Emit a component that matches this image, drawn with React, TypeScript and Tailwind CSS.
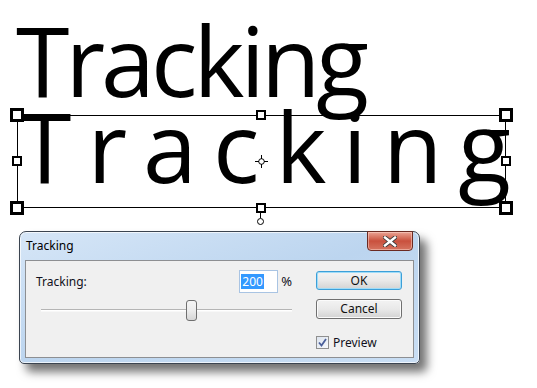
import React from "react";

const sans = "font-['Noto_Sans','Open_Sans',sans-serif]";

// selection handle on the text frame
const Handle = ({ className }: { className: string }) => (
  <div className={`absolute bg-white border-black ${className}`} />
);

const CloseGlyph = () => (
  <svg width="14" height="11" viewBox="0 0 14 11">
    <path
      d="M2 1.5 L12 9.5 M12 1.5 L2 9.5"
      stroke="#3a3a3a"
      strokeWidth="4.2"
      strokeLinecap="square"
    />
    <path
      d="M2 1.5 L12 9.5 M12 1.5 L2 9.5"
      stroke="#ffffff"
      strokeWidth="2.4"
      strokeLinecap="square"
    />
  </svg>
);

const Crosshair = () => (
  <svg width="13" height="13" viewBox="0 0 13 13">
    <circle cx="6.5" cy="6.5" r="2.8" fill="none" stroke="black" strokeWidth="1" />
    <path d="M6.5 0 V4 M6.5 9 V13 M0 6.5 H4 M9 6.5 H13" stroke="black" strokeWidth="1" />
  </svg>
);

const Button = ({ label, focused }: { label: string; focused?: boolean }) => (
  <div
    className={`w-[86px] flex items-center justify-center rounded-[3px] border text-[12px] text-[#111] bg-gradient-to-b from-[#f3f3f3] via-[#e9e9e9] to-[#d3d3d3] ${
      focused
        ? "h-[19px] border-[#3c9fd8] shadow-[inset_0_0_0_1px_#9fdcf8]"
        : "h-[20px] border-[#707070] shadow-[inset_0_0_0_1px_#fbfbfb]"
    }`}
  >
    {label}
  </div>
);

export default function App() {
  return (
    <div className="w-[537px] h-[388px] bg-white overflow-hidden">
      {/* plain text */}
      <div className="pl-[16px] pt-[11px] h-[115px]">
        <div className="text-[97px] leading-none font-['Open_Sans',sans-serif] text-black tracking-[-4px] whitespace-nowrap">
          Tracking
        </div>
      </div>

      {/* tracked text inside its frame */}
      <div className="ml-[17px] w-[489px] h-[93px] border border-black relative">
        <div className="-mt-[19px] text-[97px] leading-none font-['Open_Sans',sans-serif] text-black tracking-[16px] whitespace-nowrap">
          Tracking
        </div>
        <Handle className="w-[14px] h-[14px] border-[3px] left-[-8px] top-[-8px]" />
        <Handle className="w-[14px] h-[14px] border-[3px] right-[-8px] top-[-8px]" />
        <Handle className="w-[14px] h-[14px] border-[3px] left-[-8px] bottom-[-8px]" />
        <Handle className="w-[14px] h-[14px] border-[3px] right-[-8px] bottom-[-8px]" />
        <Handle className="w-[10px] h-[10px] border-2 left-[238px] top-[-6px]" />
        <Handle className="w-[10px] h-[10px] border-2 left-[238px] bottom-[-6px]" />
        <Handle className="w-[10px] h-[10px] border-2 left-[-6px] top-[40px]" />
        <Handle className="w-[10px] h-[10px] border-2 right-[-6px] top-[40px]" />
        <div className="absolute left-[237px] top-[39px]">
          <Crosshair />
        </div>
        <div className="absolute left-[242px] bottom-[-11px] w-px h-[5px] bg-black" />
        <div className="absolute left-[239px] bottom-[-18px] w-[7px] h-[7px] rounded-full border border-black bg-white" />
      </div>

      {/* dialog */}
      <div
        className={`ml-[19px] mt-[23px] w-[401px] h-[133px] flex flex-col rounded-t-[7px] rounded-b-[5px] border border-[#3b4450] bg-gradient-to-br from-[#d6e6f7] via-[#bcd5ef] to-[#c9def4] shadow-[7px_8px_10px_rgba(0,0,0,0.55),inset_0_0_0_1px_rgba(255,255,255,0.7)] px-[5px] pb-[5px] ${sans}`}
      >
        <div className="h-[28px] flex items-start justify-between">
          <div className="pl-[1px] pt-[7px] text-[12px] leading-[14px] text-black">Tracking</div>
          <div className="-mt-px mr-[1px] w-[46px] h-[20px] flex items-center justify-center rounded-b-[4px] border border-[#6b2a22] bg-gradient-to-b from-[#eaa394] via-[#c9503d] to-[#d5735f] shadow-[inset_0_0_0_1px_rgba(255,220,210,0.5)]">
            <CloseGlyph />
          </div>
        </div>

        <div className="h-[98px] border border-[#8d8f92] bg-[#f0f0f0] flex text-[12px] text-[#101020]">
          {/* left column */}
          <div className="pl-[10px] pt-[9px] w-[266px]">
            <div className="flex items-center h-[23px]">
              <div className="w-[204px]">Tracking:</div>
              <div className="w-[39px] h-[23px] border border-[#a9c4e3] bg-white flex items-center pl-[1px]">
                <span className="bg-[#3399ff] text-white leading-[15px] px-[1px]">200</span>
              </div>
              <div className="ml-[3px] text-[13px]">%</div>
            </div>
            <div className="mt-[7px] ml-[5px] w-[251px] h-[21px] relative flex items-center">
              <div className="w-full h-[3px] border-t border-[#b5b5b5] bg-white border-b border-b-[#f8f8f8]" />
              <div className="absolute left-[145px] top-0 w-[11px] h-[21px] rounded-[3px] border border-[#6f6f6f] bg-gradient-to-b from-[#f5f5f5] via-[#ececec] to-[#d6d6d6]" />
            </div>
          </div>

          {/* right column */}
          <div className="ml-[24px] pt-[10px] flex flex-col">
            <Button label="OK" focused />
            <div className="mt-[9px]">
              <Button label="Cancel" />
            </div>
            <div className="mt-[17px] flex items-center h-[13px]">
              <div className="w-[13px] h-[13px] border border-[#8f8f8f] bg-gradient-to-br from-[#dde4ee] to-[#f6f8fb] flex items-center justify-center">
                <svg width="9" height="9" viewBox="0 0 9 9">
                  <path d="M1 4.5 L3.5 7.5 L8 1" fill="none" stroke="#4a5f9a" strokeWidth="1.8" />
                </svg>
              </div>
              <div className="ml-[4px]">Preview</div>
            </div>
          </div>
        </div>
      </div>
    </div>
  );
}
